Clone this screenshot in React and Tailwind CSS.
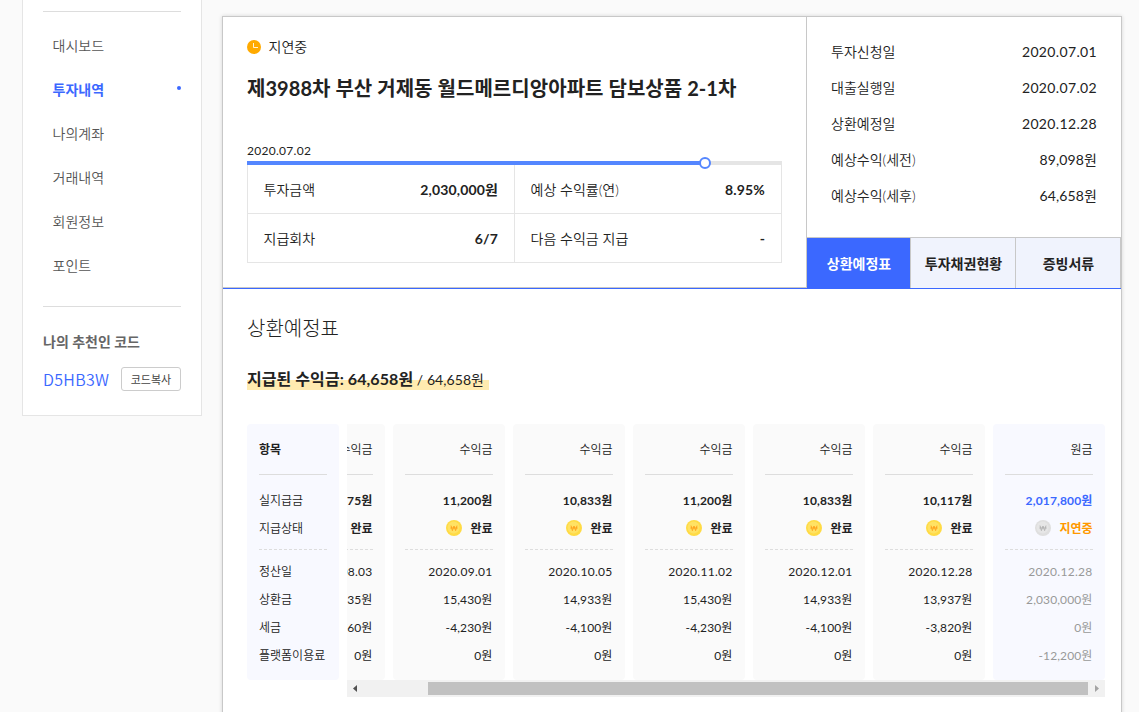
import clsx from "clsx";

const menus = ["대시보드", "투자내역", "나의계좌", "거래내역", "회원정보", "포인트"];

const infos = [
	["투자신청일", "2020.07.01"],
	["대출실행일", "2020.07.02"],
	["상환예정일", "2020.12.28"],
	["예상수익(세전)", "89,098원"],
	["예상수익(세후)", "64,658원"],
];

const tabs = ["상환예정표", "투자채권현황", "증빙서류"];

const summary = [
	["투자금액", "2,030,000원"],
	["예상 수익률(연)", "8.95%"],
	["지급회차", "6/7"],
	["다음 수익금 지급", "-"],
];

const payments = [
	{ paid: "10,175원", rows: ["2020.08.03", "14,935원", "-4,760원", "0원"] },
	{ paid: "11,200원", rows: ["2020.09.01", "15,430원", "-4,230원", "0원"] },
	{ paid: "10,833원", rows: ["2020.10.05", "14,933원", "-4,100원", "0원"] },
	{ paid: "11,200원", rows: ["2020.11.02", "15,430원", "-4,230원", "0원"] },
	{ paid: "10,833원", rows: ["2020.12.01", "14,933원", "-4,100원", "0원"] },
	{ paid: "10,117원", rows: ["2020.12.28", "13,937원", "-3,820원", "0원"] },
	{
		principal: true,
		paid: "2,017,800원",
		rows: ["2020.12.28", "2,030,000원", "0원", "-12,200원"],
	},
];

const ClockIcon = () => (
	<svg className="w-3.5 h-3.5" viewBox="0 0 14 14">
		<circle cx="7" cy="7" r="7" fill="#ffaa00" />
		<path d="M6.5 3v4.5h4.5" fill="none" stroke="#fff" strokeOpacity=".85" />
	</svg>
);

const CoinIcon = ({ gray }) => (
	<svg className="w-4 h-4 -translate-y-px" viewBox="0 0 16 16">
		<circle cx="8" cy="8" r="8" fill={gray ? "#dfdfdf" : "#ffdb45"} />
		<circle cx="7.6" cy="7.6" r="6" fill={gray ? "#e6e6e6" : "#ffe264"} />
		<path
			d="M5 5.6l1.4 5L8 6l1.6 4.6 1.4-5M4.3 8h7.4"
			fill="none"
			stroke={gray ? "#b5b5b5" : "#ffa51f"}
			strokeWidth="1"
		/>
	</svg>
);

const Sidebar = () => (
	<aside className="w-[180px] h-[416px] shrink-0 bg-white border border-t-0 border-[#e5e5e5] px-5 pt-[11px]">
		<ul className="border-y border-[#ddd] pt-3 h-[296px]">
			{menus.map((menu) => (
				<li
					key={menu}
					className={clsx(
						"flex items-center justify-between h-11 pl-[9.5px] text-sm",
						menu === "투자내역" ? "text-[#3b68ff] font-bold" : "text-[#555]"
					)}
				>
					{menu}
					{menu === "투자내역" && (
						<i className="w-1 h-1 mb-1 rounded-full bg-[#3b68ff]" />
					)}
				</li>
			))}
		</ul>
		<p className="mt-[25px] text-sm leading-5 font-bold text-[#666]">나의 추천인 코드</p>
		<div className="flex items-center justify-between mt-[15px]">
			<span className="font-['Noto_Sans_CJK_KR',sans-serif] font-[350] text-base leading-6 tracking-[0.3px] text-[#3b68ff]">
				D5HB3W
			</span>
			<button className="w-[60px] h-6 pt-px rounded-[3px] border border-[#ccc] text-[11px] leading-5 font-normal text-[#444]">
				코드복사
			</button>
		</div>
	</aside>
);

const Column = ({ principal, paid, rows }) => (
	<div
		className={clsx(
			"w-28 h-64 shrink-0 px-3 rounded text-right",
			principal ? "bg-[#f8f9ff]" : "bg-[#fafafa]"
		)}
	>
		<p className="h-[51px] pr-[0.5px] leading-[52px] border-b border-[#ddd]">
			{principal ? "원금" : "수익금"}
		</p>
		<div className="pt-3 pb-1.5 border-b border-dashed border-[#ddd] leading-7 font-bold">
			<p className={clsx("tracking-[0.15px] pr-[0.5px]", principal && "text-[#3b68ff]")}>
				{paid}
			</p>
			<p
				className={clsx(
					"flex items-center justify-end gap-[8.5px] pr-[0.5px]",
					principal && "text-[#ff9900]"
				)}
			>
				<CoinIcon gray={principal} />
				{principal ? "지연중" : "완료"}
			</p>
		</div>
		<div
			className={clsx(
				"pt-2 pr-[0.5px] leading-7 font-normal",
				principal && "text-[#999]"
			)}
		>
			{rows.map((row, index) => (
				<p
					key={index}
					className={index === 0 ? "tracking-[0.28px]" : "tracking-[0.12px]"}
				>
					{row}
				</p>
			))}
		</div>
	</div>
);

const Schedule = () => (
	<div className="flex gap-2 mt-8 text-xs">
		<div className="w-[92px] h-64 shrink-0 px-3 rounded bg-[#f8f9ff] whitespace-nowrap">
			<p className="h-[51px] leading-[52px] border-b border-[#ddd] font-bold">항목</p>
			<div className="pt-3 pb-1.5 border-b border-dashed border-[#ddd] leading-7">
				<p>실지급금</p>
				<p>지급상태</p>
			</div>
			<div className="pt-2 leading-7">
				<p>정산일</p>
				<p>상환금</p>
				<p>세금</p>
				<p>플랫폼이용료</p>
			</div>
		</div>
		<div className="w-[758px]">
			<div className="flex justify-end gap-2 overflow-hidden">
				{payments.map((payment, index) => (
					<Column key={index} {...payment} />
				))}
			</div>
			<div className="flex items-center justify-between h-[17px] bg-[#f1f1f1]">
				<svg className="w-[17px] h-[17px]" viewBox="0 0 17 17">
					<path d="M10 5v7l-4-3.5z" fill="#505050" />
				</svg>
				<div className="w-[660px] h-[13px] ml-16 bg-[#c1c1c1]" />
				<svg className="w-[17px] h-[17px]" viewBox="0 0 17 17">
					<path d="M7 5v7l4-3.5z" fill="#a3a3a3" />
				</svg>
			</div>
		</div>
	</div>
);

const App = () => {
	return (
		<div className="flex items-start gap-5 w-[1139px] h-[712px] overflow-hidden pl-[22px] bg-[#fafafa] text-[#222] font-[350] font-[Lato,'Noto_Sans_CJK_KR',sans-serif]">
			<Sidebar />
			<main className="w-[900px] h-[720px] mt-4 bg-white border border-[#c8c8c8] shadow-[0_0_4px_rgba(0,0,0,0.15)]">
				<section className="flex h-[272px] border-b border-[#3b68ff]">
					<div className="w-[584px] h-[271px] border-r border-b border-[#c8c8c8] px-6 pt-5">
						<p className="flex items-center gap-[7.5px] h-5 text-sm">
							<ClockIcon />
							지연중
						</p>
						<h2 className="mt-4 text-xl leading-[30px] font-bold tracking-[0.05px]">
							제3988차 부산 거제동 월드메르디앙아파트 담보상품 2-1차
						</h2>
						<p className="mt-[39px] text-xs leading-[18px] font-normal tracking-[0.28px]">
							2020.07.02
						</p>
						<div className="relative h-1 mt-px w-[535px] bg-[#e5e5e5]">
							<div className="w-[458px] h-1 bg-[#5486ff]" />
							<div className="absolute -top-1 left-[452px] w-3 h-3 rounded-full bg-white border-2 border-[#5486ff]" />
						</div>
						<dl className="grid grid-cols-[267px_267px] w-[535px] border-l border-[#e5e5e5] text-sm">
							{summary.map(([label, value]) => (
								<div
									key={label}
									className="flex items-center justify-between h-[49px] pt-px pl-[15.5px] pr-4 border-r border-b border-[#e5e5e5]"
								>
									<dt>{label}</dt>
									<dd className="font-bold tracking-[0.15px]">{value}</dd>
								</div>
							))}
						</dl>
					</div>
					<div className="w-[314px]">
						<dl className="h-[220px] px-6 pt-[17px] text-sm">
							{infos.map(([label, value], index) => (
								<div key={label} className="flex items-center justify-between h-9">
									<dt>{label}</dt>
									<dd
										className={clsx(
											"font-normal",
											index < 3 ? "tracking-[0.35px]" : "tracking-[0.12px]"
										)}
									>
										{value}
									</dd>
								</div>
							))}
						</dl>
						<div className="grid grid-cols-[104px_105px_105px] grid-rows-[50px] h-[51px] border-t border-[#c8c8c8] text-sm font-bold">
							{tabs.map((tab, index) => (
								<button
									key={tab}
									className={clsx(
										"pt-px pl-px border-r border-[#c8c8c8]",
										index === 0 ? "bg-[#3b68ff] text-white" : "bg-[#f0f3fd]"
									)}
								>
									{tab}
								</button>
							))}
						</div>
					</div>
				</section>
				<section className="px-6 pt-6">
					<h3 className="text-xl leading-[30px] font-light">상환예정표</h3>
					<p className="flex mt-6 h-[25px]">
						<span className="h-[23px] pr-[5px] leading-6 text-sm font-normal tracking-[0.07px] bg-linear-to-t from-[#ffebb0] from-[10px] to-transparent to-[10px]">
							<b className="text-base leading-6">지급된 수익금: 64,658원</b> / 64,658원
						</span>
					</p>
					<Schedule />
				</section>
			</main>
		</div>
	);
};

export default App;
